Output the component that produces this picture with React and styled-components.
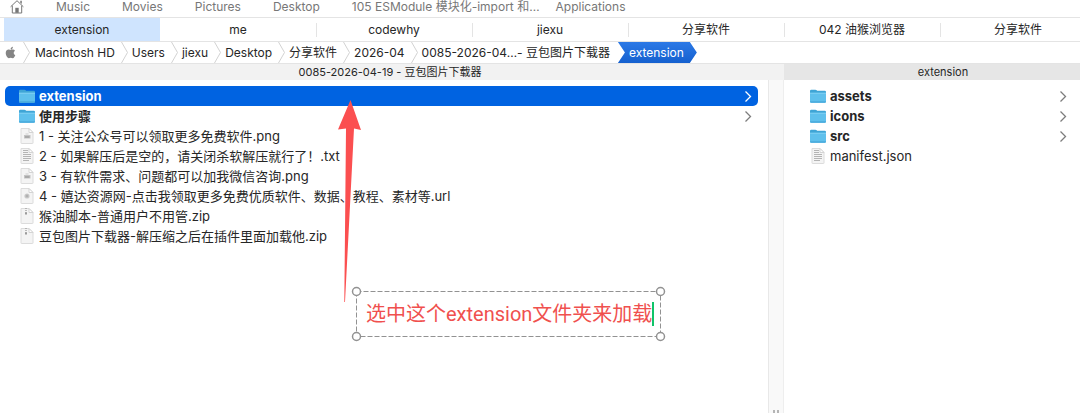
import React, { useState } from "react";
import styled, { createGlobalStyle, ThemeProvider } from "styled-components";
import { FaApple } from "react-icons/fa";

const theme = {
  colors: {
    text: "#262626",
    muted: "#777777",
    line: "#e4e4e4",
    selection: "#0063e1",
    tab: "#cfe4fe",
    note: "#f0504e",
  },
};

const GlobalStyle = createGlobalStyle`
  * {
    box-sizing: border-box;
  }
  body {
    margin: 0;
    background: #ffffff;
    font-family: Inter, "Noto Sans CJK SC", sans-serif;
    line-height: 16px;
  }
  button, input {
    font: inherit;
    color: inherit;
    background: none;
    border: none;
    padding: 0;
    margin: 0;
  }
  button {
    cursor: default;
  }
`;

const Window = styled.div`
  display: flex;
  flex-direction: column;
  min-height: 100vh;
  overflow: hidden;
  color: ${(props) => props.theme.colors.text};
  font-size: 12px;
`;

/* Favorites */
const FavoritesBar = styled.nav`
  display: flex;
  align-items: flex-start;
  height: 18px;
  padding: 0 10px;
  gap: 32px;
  color: ${(props) => props.theme.colors.muted};
  border-bottom: 1px solid ${(props) => props.theme.colors.line};
`;

const Favorite = styled.button`
  flex: none;
  display: flex;
  line-height: 14px;
  white-space: nowrap;
  margin-right: ${(props) => (props.$tight ? "-16px" : "0")};
`;

/* Tabs */
const TabBar = styled.div`
  display: flex;
  height: 24px;
  padding-left: 4px;
  border-bottom: 1px solid ${(props) => props.theme.colors.line};
`;

const Tab = styled.button`
  flex: 1 0 156px;
  display: flex;
  align-items: center;
  justify-content: center;
  background: ${(props) => (props.$active ? props.theme.colors.tab : "none")};

  & + &::before {
    content: "";
    width: 1px;
    height: 14px;
    margin-right: auto;
    background: ${(props) => props.theme.colors.line};
  }
  & + &::after {
    content: "";
    width: 1px;
    margin-left: auto;
  }
`;

/* Path */
const PathBar = styled.nav`
  display: flex;
  align-items: center;
  height: 22px;
  padding-left: 4px;
  border-bottom: 1px solid ${(props) => props.theme.colors.line};
`;

const Crumb = styled.button`
  flex: none;
  display: flex;
  align-items: center;
  height: 21px;
  margin-right: 4px;
  gap: 6px;
  white-space: nowrap;

  &:first-child {
    margin-right: 5px;
  }
`;

const CurrentCrumb = styled.button`
  flex: none;
  height: 21px;
  margin-left: 4px;
  padding: 0 13px 0 11px;
  color: #ffffff;
  background: linear-gradient(#2c79e6, #1560cf);
  clip-path: polygon(
    0 0,
    calc(100% - 7px) 0,
    100% 50%,
    calc(100% - 7px) 100%,
    0 100%,
    7px 50%
  );
`;

/* Columns */
const Columns = styled.main`
  position: relative;
  flex: 1;
  display: grid;
  grid-template-columns: minmax(0, 1fr) 296px;
`;

const Column = styled.section`
  display: flex;
  flex-direction: column;
`;

const ColumnHeader = styled.h2`
  margin: 0;
  height: 16px;
  padding: ${(props) => (props.$active ? "0 0 0 22px" : "0 4px 0 0")};
  font-size: 11px;
  font-weight: 400;
  line-height: 16px;
  text-align: center;
  background: ${(props) => (props.$active ? "#e6e6e6" : "#f2f2f2")};
`;

const ColumnBody = styled.div`
  flex: 1;
  display: flex;
`;

const FileList = styled.ul`
  flex: 1;
  min-width: 0;
  margin: 0;
  padding: ${(props) => (props.$last ? "6px 7px 0 12px" : "6px 10px 0 5px")};
  list-style: none;
`;

const FileRow = styled.button`
  display: flex;
  align-items: center;
  width: 100%;
  height: 20px;
  padding: 0 6px 0 14px;
  gap: 4px;
  border-radius: 5px;
  font-size: 13px;
  font-weight: ${(props) => (props.$folder ? 700 : 400)};
  color: ${(props) => (props.$selected ? "#ffffff" : "inherit")};
  background: ${(props) =>
    props.$selected ? props.theme.colors.selection : "none"};
`;

const FileName = styled.span`
  flex: 1;
  text-align: left;
  white-space: nowrap;
`;

const Gutter = styled.div`
  display: flex;
  align-items: flex-end;
  justify-content: center;
  gap: 2px;
  width: 16px;
  background: #f9f9f9;
  border-left: 1px solid #e8e8e8;
  border-right: 1px solid #eeeeee;
`;

const Grip = styled.span`
  width: 2px;
  height: 3px;
  background: #b5b5b5;
`;

/* Markup drawn over the columns */
const Arrow = styled.svg`
  position: absolute;
  left: 338px;
  top: 36px;
  pointer-events: none;
`;

const Note = styled.label`
  position: absolute;
  left: 356px;
  top: 227px;
  display: flex;
  align-items: center;
  width: 305px;
  height: 46px;
  padding: 0 7px 0 10px;
  color: ${(props) => props.theme.colors.note};
  font-family: Roboto, "Noto Sans CJK SC", sans-serif;
  font-size: 20px;
`;

const NoteFrame = styled.svg`
  position: absolute;
  left: -5px;
  top: -5px;
  pointer-events: none;
`;

const NoteInput = styled.input`
  flex: 1;
  min-width: 0;
  height: 30px;
  line-height: 30px;
  outline: none;
`;

const Caret = styled.span`
  flex: none;
  width: 2px;
  height: 24px;
  background: #10c469;
`;

const favorites = [
  "Music",
  "Movies",
  "Pictures",
  "Desktop",
  "105 ESModule 模块化-import 和…",
  "Applications",
];

const tabs = [
  "extension",
  "me",
  "codewhy",
  "jiexu",
  "分享软件",
  "042 油猴浏览器",
  "分享软件",
];

const crumbs = [
  "Macintosh HD",
  "Users",
  "jiexu",
  "Desktop",
  "分享软件",
  "2026-04",
];

const files = [
  { name: "extension", kind: "folder" },
  { name: "使用步骤", kind: "folder" },
  { name: "1 - 关注公众号可以领取更多免费软件.png", kind: "image" },
  { name: "2 - 如果解压后是空的，请关闭杀软解压就行了！.txt", kind: "text" },
  { name: "3 - 有软件需求、问题都可以加我微信咨询.png", kind: "image" },
  {
    name: "4 - 嬉达资源网-点击我领取更多免费优质软件、数据、教程、素材等.url",
    kind: "url",
  },
  { name: "猴油脚本-普通用户不用管.zip", kind: "zip" },
  { name: "豆包图片下载器-解压缩之后在插件里面加载他.zip", kind: "zip" },
];

const extensionFiles = [
  { name: "assets", kind: "folder" },
  { name: "icons", kind: "folder" },
  { name: "src", kind: "folder" },
  { name: "manifest.json", kind: "text" },
];

function HomeIcon() {
  return (
    <svg width="14" height="14" viewBox="0 0 14 14" fill="none" stroke="#777">
      <path d="M0.6 6.8 7 0.7l6.4 6.1M2.3 5.6v7.4h9.4V5.6" />
      <path d="M10.3 0.8h1.5v3.2l-1.5-1.4z" fill="#777" stroke="none" />
      <path d="M5.3 7.8h3.4v5H5.3z" fill="#777" stroke="none" />
    </svg>
  );
}

function Separator() {
  return (
    <svg width="7" height="21" viewBox="0 0 7 21" fill="none">
      <path d="M0.5 0 6.5 10.5 0.5 21" stroke="#d2d2d2" />
    </svg>
  );
}

function Chevron({ color }) {
  return (
    <svg width="8" height="12" viewBox="0 0 8 12" fill="none">
      <path d="M1.5 1.5 6.5 6.5 1.5 11.5" stroke={color} strokeWidth="1.3" />
    </svg>
  );
}

function FolderIcon() {
  return (
    <svg width="16" height="16" viewBox="0 0 16 16">
      <path
        d="M0 3q0-1.3 1.2-1.3h4.2q.8 0 1.3.6l.5.5h7.7Q16 2.8 16 4v3H0z"
        fill="#3fa5d6"
      />
      <path d="M0 5.2h16v8.3q0 1.3-1.2 1.3H1.2Q0 14.8 0 13.5z" fill="#5fc0ec" />
      <path d="M0 4.7h16v1H0z" fill="#86d5f7" />
      <path d="M0 13.2q0 1.6 1.2 1.6h13.6q1.2 0 1.2-1.6z" fill="#48aadb" />
    </svg>
  );
}

const glyphs = {
  image: (
    <>
      <path d="M5 8h6.5v3.5H5z" fill="#c4c4c4" />
      <path d="M6 10h4.5" stroke="#8f8f8f" />
      <path d="M6.5 7h3" stroke="#cfcfcf" />
    </>
  ),
  text: (
    <path
      d="M4 3.5h5M4 5.5h5M4 7.5h8M4 9.5h8M4 11.5h8M4 13.5h6"
      stroke="#b4b4b4"
    />
  ),
  url: (
    <>
      <circle cx="8" cy="9" r="2.6" fill="#cbcbcb" />
      <path d="M6.5 9h3M8 7.5v3" stroke="#a8a8a8" />
    </>
  ),
  zip: (
    <>
      <path d="M7 1v5" stroke="#a8a8a8" strokeWidth="1.5" strokeDasharray="1 1" />
      <path d="M6 5.5h2v2H6z" fill="#9b9b9b" />
    </>
  ),
};

function DocumentIcon({ kind }) {
  return (
    <svg width="16" height="18" viewBox="0 0 16 18">
      <path
        d="M2 1.5h8l4 4v10.5q0 .5-.5.5h-11q-.5 0-.5-.5z"
        fill="#f4f4f4"
        stroke="#dcdcdc"
      />
      <path d="M10 1.5v4h4z" fill="#ffffff" stroke="#d4d4d4" />
      {glyphs[kind]}
    </svg>
  );
}

function Files({ items, selected, onSelect, last }) {
  return (
    <FileList $last={last}>
      {items.map(({ name, kind }) => {
        const isFolder = kind === "folder";
        const isSelected = name === selected;

        return (
          <li key={name}>
            <FileRow
              $folder={isFolder}
              $selected={isSelected}
              onClick={() => onSelect && onSelect(name)}
            >
              {isFolder ? <FolderIcon /> : <DocumentIcon kind={kind} />}
              <FileName>{name}</FileName>
              {isFolder && <Chevron color={isSelected ? "#ffffff" : "#7d7d7d"} />}
            </FileRow>
          </li>
        );
      })}
    </FileList>
  );
}

export default function App() {
  const [activeTab, setActiveTab] = useState(0);
  const [selected, setSelected] = useState("extension");
  const [note, setNote] = useState("选中这个extension文件夹来加载");

  return (
    <ThemeProvider theme={theme}>
      <GlobalStyle />
      <Window>
        <FavoritesBar>
          <Favorite aria-label="Home">
            <HomeIcon />
          </Favorite>
          {favorites.map((name) => (
            <Favorite key={name} $tight={name.endsWith("…")}>
              {name}
            </Favorite>
          ))}
        </FavoritesBar>

        <TabBar>
          {tabs.map((name, i) => (
            <Tab
              key={i}
              $active={i === activeTab}
              onClick={() => setActiveTab(i)}
            >
              {name}
            </Tab>
          ))}
        </TabBar>

        <PathBar>
          <Crumb aria-label="Computer">
            <FaApple size={13} color="#858585" />
            <Separator />
          </Crumb>
          {crumbs.map((name) => (
            <Crumb key={name}>
              {name}
              <Separator />
            </Crumb>
          ))}
          <Crumb>0085-2026-04…- 豆包图片下载器</Crumb>
          <CurrentCrumb>extension</CurrentCrumb>
        </PathBar>

        <Columns>
          <Column>
            <ColumnHeader>0085-2026-04-19 - 豆包图片下载器</ColumnHeader>
            <ColumnBody>
              <Files items={files} selected={selected} onSelect={setSelected} />
              <Gutter>
                <Grip />
                <Grip />
              </Gutter>
            </ColumnBody>
          </Column>
          <Column>
            <ColumnHeader $active>extension</ColumnHeader>
            <ColumnBody>
              <Files items={extensionFiles} last />
            </ColumnBody>
          </Column>

          <Arrow width="24" height="203" viewBox="0 0 24 203">
            <path d="M12.5 0 23 30 16 28.5 7 202H6.3L8 28.5 0 29.5z" fill="#fb4f50" />
          </Arrow>
          <Note>
            <NoteFrame width="315" height="56" viewBox="0 0 315 56" fill="none">
              <path
                d="M5.5 5.5h304v45h-304z"
                stroke="#929292"
                strokeDasharray="5 2"
              />
              <g fill="#ffffff" stroke="#929292" strokeWidth="1.5">
                <circle cx="5.5" cy="5.5" r="4" />
                <circle cx="309.5" cy="5.5" r="4" />
                <circle cx="5.5" cy="50.5" r="4" />
                <circle cx="309.5" cy="50.5" r="4" />
              </g>
            </NoteFrame>
            <NoteInput
              aria-label="Note"
              value={note}
              onChange={(e) => setNote(e.target.value)}
            />
            <Caret />
          </Note>
        </Columns>
      </Window>
    </ThemeProvider>
  );
}
